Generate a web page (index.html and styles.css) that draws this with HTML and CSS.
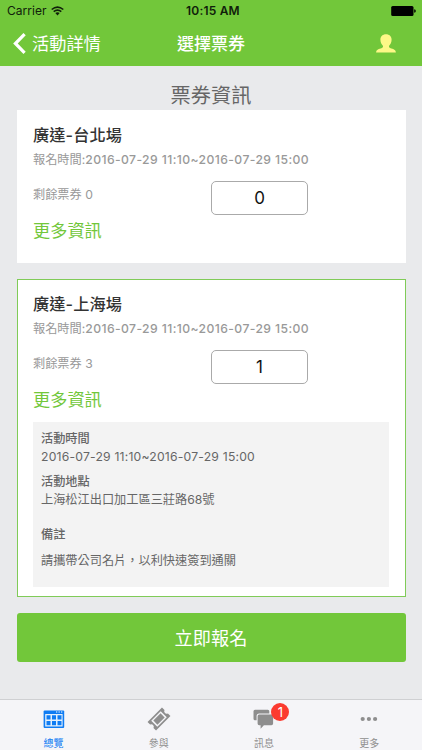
FILE: index.html
```
<!DOCTYPE html>
<html lang="zh-Hant">
<head>
<meta charset="utf-8">
<title>選擇票券</title>
<link rel="stylesheet" href="styles.css">
</head>
<body>
<div class="screen">
  <header class="header">
    <div class="status">
      <div class="carrier"><span>Carrier</span>
        <svg width="13" height="10" viewBox="0 0 13 10" fill="none" stroke="#10200a" stroke-width="1.6"><path d="M.7 3.5Q6.500-1.400 12.300 3.500M2.700 5.700Q6.500 2.400 10.300 5.700"/><path d="M4.300 7.100Q6.500 5.400 8.700 7.100L6.500 9.500z" fill="#10200a" stroke="none"/></svg>
      </div>
      <span class="clock">10:15 AM</span>
      <svg class="battery" width="25" height="10" viewBox="0 0 25 10"><rect x=".2" width="22.3" height="10" rx="1.5"/><path d="M23.200 3.200q1.600.3 1.600 1.800t-1.600 1.800z"/></svg>
    </div>
    <nav class="nav">
      <a class="back"><svg width="13" height="21" viewBox="0 0 13 21" fill="none" stroke="#fff" stroke-width="3.2"><path d="M11.600 1.200 2.400 10.500l9.200 9.300"/></svg><span>活動詳情</span></a>
      <h1 class="nav-title">選擇票券</h1>
      <svg class="user" width="20" height="19" viewBox="0 0 20 19"><path fill="#fdf887" d="M10 .3c3.300 0 5.600 2.200 5.600 5.500 0 2.500-1.100 4.700-2.500 5.900-.4 1.300.1 2 1.500 2.500 2.200.8 5.100 1.100 5.300 4.200H.1c.2-3.100 3.100-3.400 5.300-4.200 1.400-.5 1.900-1.200 1.500-2.500C5.500 10.500 4.400 8.300 4.400 5.800 4.400 2.500 6.700.3 10 .3z"/></svg>
    </nav>
  </header>
  <main class="content">
    <h2 class="page-title">票券資訊</h2>
    <section class="card">
      <h3 class="name">廣達-台北場</h3>
      <p class="period">報名時間:<span>2016-07-29 11:10~2016-07-29 15:00</span></p>
      <div class="row"><span class="left">剩餘票券 0</span><div class="count">0</div></div>
      <a class="more">更多資訊</a>
    </section>
    <section class="card selected">
      <h3 class="name">廣達-上海場</h3>
      <p class="period">報名時間:<span>2016-07-29 11:10~2016-07-29 15:00</span></p>
      <div class="row"><span class="left">剩餘票券 3</span><div class="count">1</div></div>
      <a class="more">更多資訊</a>
      <div class="details">
        <h4>活動時間</h4>
        <p class="date">2016-07-29 11:10~2016-07-29 15:00</p>
        <h4>活動地點</h4>
        <p class="place">上海松江出口加工區三莊路68號</p>
        <h4>備註</h4>
        <p class="note">請攜帶公司名片，以利快速簽到通關</p>
      </div>
    </section>
    <div class="submit">立即報名</div>
  </main>
  <footer class="tabs">
    <a class="tab active">
      <svg width="22" height="20" viewBox="0 0 22 20"><rect x=".6" y="1.500" width="20.600" height="17.500" rx="1" fill="#0f7cf3"/><path fill="#fff" d="M13 2.500h1.300v1H13zM15.500 2.500h1.300v1h-1.300zM18 2.500h1.300v1H18z"/><path fill="#e4f0fc" d="M2.200 5h17.400v12.500H2.200z"/><path fill="#0f7cf3" d="M3.500 6.300h4v4.200h-4zM9 6.300h4v4.200H9zM14.500 6.300h4v4.200h-4zM3.500 12h4v4.300h-4zM9 12h4v4.300H9zM14.500 12h4v4.300h-4z"/></svg>
      <span>總覽</span>
    </a>
    <a class="tab">
      <svg width="24" height="24" viewBox="0 0 24 24"><g transform="rotate(-45 12 12)"><path fill="#8e8e8e" fill-rule="evenodd" d="M1.800 6h20.400v3.600a2.500 2.500 0 0 0 0 4.800V18H1.800v-3.600a2.500 2.500 0 0 0 0-4.800zM5.300 7.700v8.600h13.400V7.700z"/><path fill="#8e8e8e" d="M6.900 9.100h10.200v5.800H6.900z"/></g></svg>
      <span>參與</span>
    </a>
    <a class="tab">
      <svg width="22" height="20" viewBox="0 0 22 20"><path fill="#8e8e8e" d="M2 .7h12.800q1.500 0 1.500 1.500v2.200H6.200Q3.600 4.400 3.600 7v4.200H2Q.5 11.200.5 9.700V2.200Q.5.700 2 .7z"/><path fill="#8e8e8e" d="M6.200 5.500h12.200q1.700 0 1.700 1.700v7.400q0 1.700-1.700 1.700h-7.500L7.600 19.700v-3.400H6.200q-1.600 0-1.600-1.700V7.200q0-1.700 1.600-1.700z"/></svg>
      <span>訊息</span>
      <b class="badge">1</b>
    </a>
    <a class="tab">
      <svg width="18" height="6" viewBox="0 0 18 6" fill="#8e8e8e"><circle cx="2.700" cy="3" r="2.100"/><circle cx="8.900" cy="3" r="2.100"/><circle cx="15.100" cy="3" r="2.100"/></svg>
      <span>更多</span>
    </a>
  </footer>
</div>
</body>
</html>
```
FILE: styles.css
```
* { box-sizing: border-box; margin: 0; padding: 0; }
body {
  font-family: Inter, "Noto Sans CJK TC", sans-serif;
  background: #e9eaec;
}
.screen { width: 422px; height: 750px; display: flex; flex-direction: column; overflow: hidden; }
svg { display: block; flex: none; }

.header { height: 66px; background: #72c73a; }
.status {
  height: 22px;
  padding: 0 6px 0 7px;
  display: grid;
  grid-template-columns: 179px 1fr auto;
  align-items: center;
  font-size: 12px;
  line-height: 22px;
  color: #10200a;
}
.carrier { display: flex; align-items: center; gap: 4px; letter-spacing: .05px; }
.clock { font-weight: 600; letter-spacing: .2px; color: #10200a; }
.nav {
  height: 43px;
  padding: 0 26px 0 13px;
  display: grid;
  grid-template-columns: 164px 1fr auto;
  align-items: center;
  color: #fff;
}
.back { display: flex; align-items: center; gap: 6px; font-size: 17.200px; line-height: 24px; }
.nav-title { font-size: 17px; font-weight: 500; line-height: 24px; }
.user { margin-top: -1px; }

.content { flex: 1; padding: 15px 16.500px 0; }
.page-title { font-size: 20.200px; font-weight: 400; line-height: 29px; color: #666; text-align: center; }
.card { height: 153px; background: #fff; padding: 13px 16.500px 0; margin-bottom: 16px; }
.selected { height: 318px; border: 1px solid #80cb58; padding: 12px 15.500px 0; }
.name { font-size: 16.200px; font-weight: 500; line-height: 24px; color: #333; letter-spacing: .1px; }
.period { margin-top: 4px; font-size: 12.200px; line-height: 18px; color: #999; white-space: nowrap; }
.period span { font-weight: 500; letter-spacing: .4px; }
.row { margin-top: 12px; display: grid; grid-template-columns: 178px 97px; height: 33px; }
.left { font-size: 12.200px; line-height: 28px; color: #999; }
.count {
  border: 1px solid #aaa;
  border-radius: 5px;
  text-align: center;
  font-size: 17px;
  line-height: 32px;
  color: #111;
}
.more { display: block; margin-top: 4px; font-size: 17.200px; line-height: 25px; color: #72c73a; }
.details { margin-top: 10px; height: 165px; background: #f3f3f3; padding: 8px 8px 0; color: #666; font-size: 12.200px; line-height: 18px; }
.details h4 { font-size: 12.200px; font-weight: 500; }
.date { letter-spacing: .2px; margin-bottom: 7px; }
.place { margin-bottom: 17px; }
.note { margin-top: 8px; }
.submit {
  height: 49px;
  background: #72c73a;
  color: #fff;
  border-radius: 3px;
  font-size: 18.200px;
  line-height: 50px;
  text-align: center;
}

.tabs {
  height: 51px;
  border-top: 1px solid #cfd0d2;
  background: #f5f5f8;
  padding-left: 1px;
  display: grid;
  grid-template-columns: repeat(4, 105.200px);
}
.tab {
  position: relative;
  display: grid;
  grid-template-rows: 37px 12px;
  align-content: start;
  justify-items: center;
  align-items: center;
  font-size: 10px;
  line-height: 12px;
  color: #8e8e8e;
}
.active { color: #0f7cf3; }
.badge {
  position: absolute;
  left: 60px;
  top: 3px;
  width: 18px;
  height: 18px;
  border-radius: 50%;
  background: #fb3b30;
  color: #fff;
  font-size: 13px;
  font-weight: 400;
  line-height: 18px;
  text-align: center;
}
```
